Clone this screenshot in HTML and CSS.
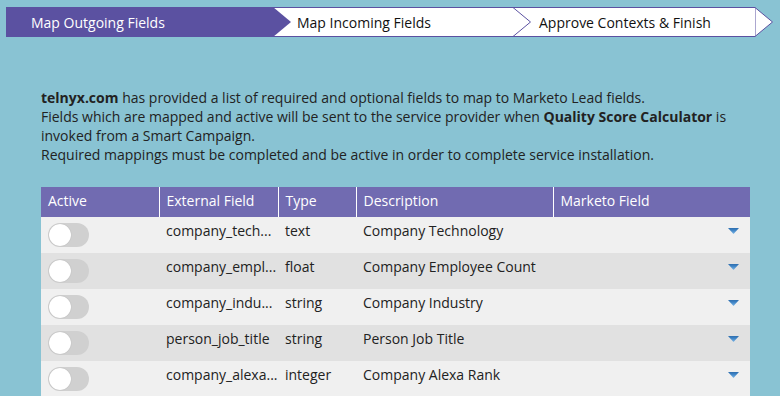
FILE: index.html
```html
<!DOCTYPE html>
<html>
<head>
    <title>Map Outgoing Fields</title>
    <link rel="stylesheet" href="styles.css">
</head>
<body>
    <div class="wizard">
        <div class="step step-current">Map Outgoing Fields</div>
        <svg class="chev" width="18" height="30" viewBox="0 0 18 30">
            <rect width="18" height="30" fill="#fff"/>
            <path d="M0 0.5H18M0 29.5H18" stroke="#5b51a1" stroke-width="1"/>
            <polygon points="0,0 18,15 0,30" fill="#5b51a1"/>
        </svg>
        <div class="step step-next">Map Incoming Fields</div>
        <svg class="chev" width="18" height="30" viewBox="0 0 18 30">
            <rect width="18" height="30" fill="#fff"/>
            <path d="M0 0.5H18M0 29.5H18" stroke="#5b51a1" stroke-width="1"/>
            <polyline points="0,0.5 17.5,15 0,29.5" fill="none" stroke="#5b51a1" stroke-width="1"/>
        </svg>
        <div class="step">Approve Contexts &amp; Finish</div>
        <svg class="chev" width="18" height="30" viewBox="0 0 18 30">
            <polygon points="0,0.5 17.5,15 0,29.5" fill="#fff" stroke="#5b51a1" stroke-width="1"/>
        </svg>
    </div>

    <p class="intro">
        <b>telnyx.com</b> has provided a list of required and optional fields to map to Marketo Lead fields.<br>
        Fields which are mapped and active will be sent to the service provider when <b>Quality Score Calculator</b> is invoked from a Smart Campaign.<br>
        Required mappings must be completed and be active in order to complete service installation.
    </p>

    <table class="fields">
        <colgroup>
            <col class="col-active">
            <col class="col-ext">
            <col class="col-type">
            <col class="col-desc">
            <col class="col-mkto">
        </colgroup>
        <thead>
            <tr>
                <th>Active</th>
                <th>External Field</th>
                <th>Type</th>
                <th>Description</th>
                <th>Marketo Field</th>
            </tr>
        </thead>
        <tbody>
            <tr>
                <td><span class="toggle"></span></td>
                <td>company_tech...</td>
                <td>text</td>
                <td>Company Technology</td>
                <td class="pick"><svg class="arrow" width="11" height="6" viewBox="0 0 11 6"><use href="#tri"/></svg></td>
            </tr>
            <tr>
                <td><span class="toggle"></span></td>
                <td>company_empl...</td>
                <td>float</td>
                <td>Company Employee Count</td>
                <td class="pick"><svg class="arrow" width="11" height="6" viewBox="0 0 11 6"><use href="#tri"/></svg></td>
            </tr>
            <tr>
                <td><span class="toggle"></span></td>
                <td>company_indu...</td>
                <td>string</td>
                <td>Company Industry</td>
                <td class="pick"><svg class="arrow" width="11" height="6" viewBox="0 0 11 6"><use href="#tri"/></svg></td>
            </tr>
            <tr>
                <td><span class="toggle"></span></td>
                <td>person_job_title</td>
                <td>string</td>
                <td>Person Job Title</td>
                <td class="pick"><svg class="arrow" width="11" height="6" viewBox="0 0 11 6"><use href="#tri"/></svg></td>
            </tr>
            <tr>
                <td><span class="toggle"></span></td>
                <td>company_alexa...</td>
                <td>integer</td>
                <td>Company Alexa Rank</td>
                <td class="pick"><svg class="arrow" width="11" height="6" viewBox="0 0 11 6"><use href="#tri"/></svg></td>
            </tr>
        </tbody>
    </table>

    <svg width="0" height="0" class="defs">
        <defs>
            <linearGradient id="triFill" x1="0" y1="0" x2="0" y2="1">
                <stop offset="0" stop-color="#2f6fae"/>
                <stop offset="0.35" stop-color="#3d82c4"/>
                <stop offset="1" stop-color="#7cb6e6"/>
            </linearGradient>
            <polygon id="tri" points="0,0 11,0 5.5,6" fill="url(#triFill)"/>
        </defs>
    </svg>
</body>
</html>
```

FILE: styles.css
```css
body {
    margin: 0;
    background-color: #89c3d3;
    font-family: "Open Sans", Arial, sans-serif;
    font-size: 14px;
    color: #222;
}

.wizard {
    display: flex;
    width: 767px;
    height: 30px;
    margin: 7px 0 0 6px;
}

.step {
    width: 224px;
    height: 30px;
    box-sizing: border-box;
    padding-left: 8px;
    line-height: 29px;
    background-color: #fff;
    border-top: 1px solid #5b51a1;
    border-bottom: 1px solid #5b51a1;
    color: #111;
}

.step-current {
    width: 267px;
    padding-left: 25px;
    background-color: #5b51a1;
    color: #fff;
}

.step-next {
    width: 222px;
    padding-left: 6px;
}

.chev {
    display: block;
    flex-shrink: 0;
}

.defs {
    display: block;
    height: 0;
}

.intro {
    margin: 51px 0 0 41px;
    width: 700px;
    line-height: 19px;
}

.fields {
    margin: 23px 0 0 41px;
    width: 709px;
    border-collapse: collapse;
    table-layout: fixed;
}

.col-active { width: 118px; }
.col-ext { width: 119px; }
.col-type { width: 78px; }
.col-desc { width: 197px; }
.col-mkto { width: 197px; }

.fields th {
    height: 30px;
    box-sizing: border-box;
    padding: 4px 7px 0;
    line-height: 20px;
    vertical-align: top;
    background-color: #716bb1;
    color: #fff;
    font-weight: normal;
    text-align: left;
    border-left: 1px solid #fff;
}

.fields th:first-child {
    border-left: none;
}

.fields td {
    height: 36px;
    box-sizing: border-box;
    padding: 4px 7px 0;
    line-height: 20px;
    vertical-align: top;
    white-space: nowrap;
    overflow: hidden;
}

.fields tbody tr:nth-child(odd) td {
    background-color: #f0f0f0;
}

.fields tbody tr:nth-child(even) td {
    background-color: #e1e1e1;
}

.toggle {
    display: block;
    position: relative;
    width: 41px;
    height: 24px;
    margin-top: 2px;
    border-radius: 12px;
    background-color: #d0d0d0;
}

.toggle::after {
    content: "";
    position: absolute;
    left: 1px;
    top: 1px;
    width: 22px;
    height: 22px;
    border-radius: 50%;
    background-color: #fff;
    box-shadow: 0 0 1px rgba(0, 0, 0, 0.25);
}

.fields td.pick {
    padding-right: 11px;
}

.arrow {
    display: block;
    float: right;
    margin-top: 7px;
}
```
